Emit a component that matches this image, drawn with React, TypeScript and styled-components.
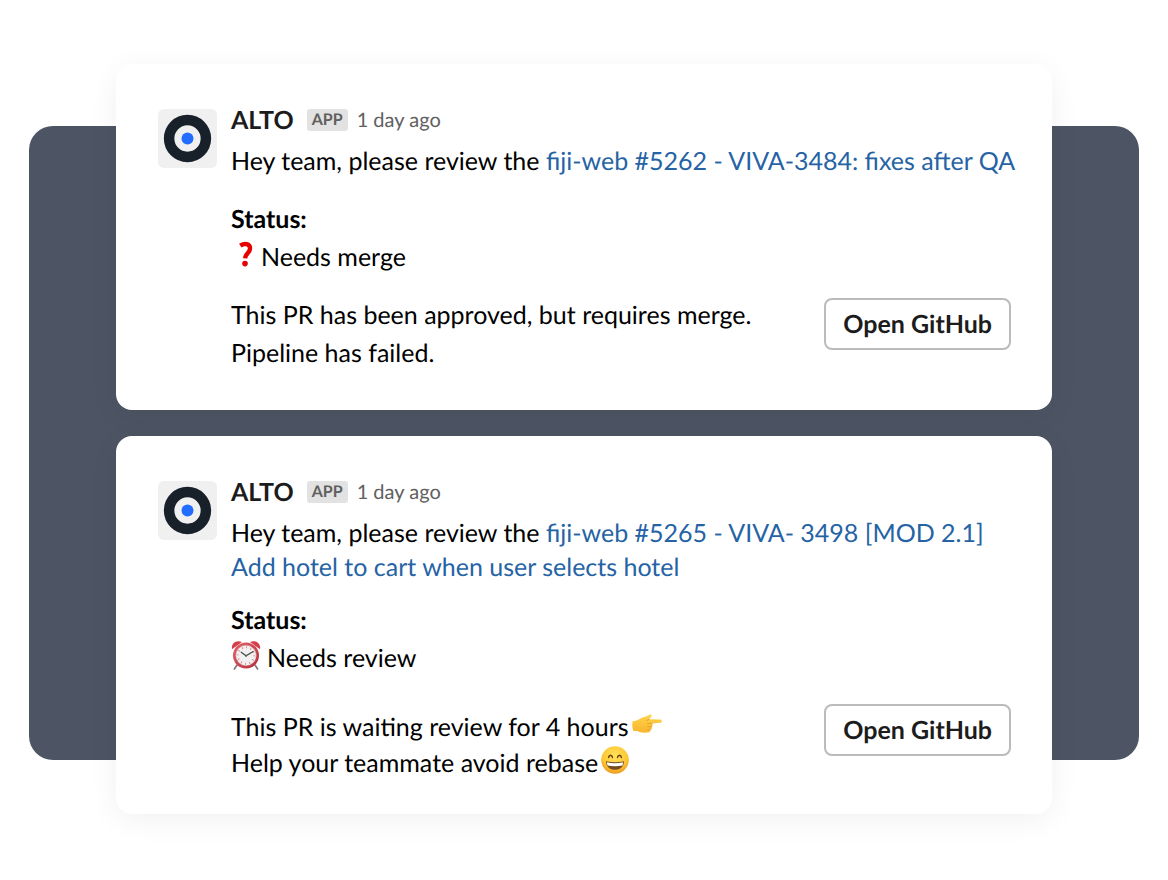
import React, { useId } from 'react';
import styled, { createGlobalStyle } from 'styled-components';

const GlobalStyle = createGlobalStyle`
  *, *::before, *::after { box-sizing: border-box; }
  body {
    margin: 0;
    background: #fff;
    color: #000;
    font-family: Lato, "Liberation Sans", sans-serif;
    font-size: 25px;
    text-rendering: geometricPrecision;
  }
`;

const Page = styled.main`
  display: grid;
  padding: 64px 29px;
`;

const Backdrop = styled.div`
  grid-area: 1 / 1;
  margin: 62px 0 54px;
  border-radius: 24px;
  background: #4d5564;
`;

const Messages = styled.div`
  grid-area: 1 / 1;
  display: flex;
  flex-direction: column;
  gap: 26px;
  margin: 0 87px;
`;

const Card = styled.article<{ $bottom: number }>`
  display: flex;
  align-items: flex-start;
  gap: 14px;
  padding: 40px 29px ${(p) => p.$bottom}px 42px;
  border-radius: 16px;
  background: #fff;
  box-shadow: 0 6px 30px rgba(0, 0, 0, 0.06);
`;

const Avatar = styled.svg`
  flex: none;
  width: 59px;
  height: 59px;
  margin-top: 5px;
`;

const Content = styled.div`
  flex: 1;
  min-width: 0;
`;

const Header = styled.header`
  display: flex;
  align-items: center;
  height: 32px;
  margin-bottom: 8px;
`;

const Name = styled.h2`
  margin: 0 13px 0 0;
  color: #1d1c1d;
  font-size: 25px;
  font-weight: 700;
`;

const Tag = styled.span`
  margin-right: 9px;
  padding: 0 5px;
  border-radius: 3px;
  background: #e2e2e2;
  color: #616061;
  font-size: 16px;
  font-weight: 700;
  line-height: 22px;
`;

const Time = styled.time`
  color: #616061;
  font-size: 20px;
`;

const Text = styled.p`
  margin: 0;
  line-height: 34px;
`;

const PrLink = styled.a`
  color: #2563a5;
  text-decoration: none;
`;

const Status = styled.section<{ $gap: number }>`
  margin-top: ${(p) => p.$gap}px;
  line-height: 38px;
`;

const StatusTitle = styled.h3`
  margin: 0;
  font-size: 25px;
  font-weight: 700;
`;

const StatusLine = styled.p`
  display: flex;
  align-items: center;
  gap: 6px;
  margin: 0;
`;

const Footer = styled.footer<{ $gap: number }>`
  display: flex;
  align-items: flex-start;
  justify-content: space-between;
  margin-top: ${(p) => p.$gap}px;
  padding-right: 12px;
`;

const Summary = styled.div<{ $line: number; $top: number }>`
  padding-top: ${(p) => p.$top}px;
  line-height: ${(p) => p.$line}px;
`;

const SummaryLine = styled.p`
  display: flex;
  align-items: center;
  gap: 3px;
  margin: 0;
`;

const Button = styled.button<{ $top: number }>`
  flex: none;
  height: 52px;
  margin-top: ${(p) => p.$top}px;
  padding: 0 17px;
  border: 2px solid #bbb;
  border-radius: 8px;
  background: #fff;
  color: #1d1c1d;
  font: 700 25px Lato, "Liberation Sans", sans-serif;
  text-rendering: inherit;
`;

const Emoji = styled.svg<{ $w: number; $h: number }>`
  flex: none;
  width: ${(p) => p.$w}px;
  height: ${(p) => p.$h}px;
  margin-bottom: 6px;
`;

const Question = () => (
  <Emoji $w={24} $h={26} viewBox="0 0 24 26" role="img" aria-label="Question">
    <path d="M9.3 4.6C13.4 1.8 19.4 2.4 19 7.9C18.7 12 14.5 12.1 14.2 17.4" fill="none" stroke="#e60000" strokeWidth="4.4" />
    <circle cx="14" cy="22.6" r="2.8" fill="#e60000" />
  </Emoji>
);

const Clock = () => {
  const id = useId();
  return (
    <Emoji $w={30} $h={30} viewBox="0 0 30 30" role="img" aria-label="Alarm clock">
      <defs>
        <linearGradient id={id} x1="0" y1="0" x2="1" y2="1">
          <stop offset="0" stopColor="#e8606b" />
          <stop offset="1" stopColor="#b52b39" />
        </linearGradient>
      </defs>
      <path d="M6 25L3.4 29M24 25L26.6 29" stroke="#777" strokeWidth="1.6" strokeLinecap="round" />
      <path d="M1 9.2C-.2 3.6 5.4-.8 11 2.1ZM29 9.2C30.2 3.6 24.6-.8 19 2.1Z" fill="#d53d4b" />
      <circle cx="15" cy="15.5" r="13" fill={`url(#${id})`} />
      <circle cx="15" cy="15.5" r="10.4" fill="#f0f0f0" stroke="#bd7479" strokeWidth=".6" />
      <circle cx="15" cy="15.5" r="8.2" fill="none" stroke="#e96f79" strokeWidth="2" strokeDasharray=".8 3.493" />
      <path d="M10.2 12.2L15 15.8L22.2 11.5" fill="none" stroke="#444" strokeWidth="1.1" strokeLinecap="round" />
      <circle cx="15" cy="15.8" r="1" fill="#555" />
    </Emoji>
  );
};

const Pointing = () => {
  const id = useId();
  return (
    <Emoji $w={30} $h={20} viewBox="0 0 30 20" role="img" aria-label="Pointing right">
      <defs>
        <linearGradient id={id} x1="0" y1="0" x2="0" y2="1">
          <stop offset="0" stopColor="#ffd34c" />
          <stop offset="1" stopColor="#f8b62d" />
        </linearGradient>
      </defs>
      <path d="M.7 7.2C4 7.2 6.2 5.7 9 4.3C12 2.8 15.5 2.3 17.4.8C19.2-.4 20.5 1.4 19 3L17.1 5.3L28 5.6C30.4 5.7 30.4 8.7 28 8.8L20 9.4C21.3 10.7 20.8 12.3 19.6 12.7C20.4 14.2 19.6 15.5 18.3 15.7C18.6 17.4 17.6 18.5 15.5 18.6C10.7 19 7.8 18.4 5.4 17.1L1.3 16.9C.2 14-.1 10 .7 7.2Z" fill={`url(#${id})`} />
      <path d="M20 9.4L15.6 9.6M19.6 12.7L15.8 12.8M18.3 15.7L15.6 15.6M17.1 5.3L14.8 6.6" fill="none" stroke="#dc9620" strokeWidth=".7" strokeLinecap="round" />
    </Emoji>
  );
};

const Smile = () => {
  const id = useId();
  return (
    <Emoji $w={28} $h={28} viewBox="0 0 28 28" role="img" aria-label="Smile">
      <defs>
        <radialGradient id={id} cx=".5" cy=".35" r=".7">
          <stop offset="0" stopColor="#ffe45c" />
          <stop offset=".65" stopColor="#fdc534" />
          <stop offset="1" stopColor="#e88b18" />
        </radialGradient>
      </defs>
      <circle cx="14" cy="14" r="13.8" fill={`url(#${id})`} />
      <path d="M7.6 11.4C8.2 8.4 10.8 8.4 11.5 11.4M16.5 11.4C17.2 8.4 19.8 8.4 20.4 11.4" fill="none" stroke="#69400f" strokeWidth="1.5" strokeLinecap="round" />
      <path d="M4.9 15.3Q14 17.2 23.1 15.3C22.8 20.8 19 23.8 14 23.8S5.2 20.8 4.9 15.3Z" fill="#754b20" />
      <path d="M5.8 16.3Q14 18 22.2 16.3L21.5 19.4Q14 21 6.5 19.4Z" fill="#fff" />
    </Emoji>
  );
};

type MessageProps = {
  pr: string;
  status: React.ReactNode;
  summary: React.ReactNode;
  line: number;
  statusGap: number;
  footerGap: number;
  summaryTop: number;
  buttonTop: number;
  bottom: number;
};

const Message = ({ pr, status, summary, line, statusGap, footerGap, summaryTop, buttonTop, bottom }: MessageProps) => (
  <Card $bottom={bottom}>
    <Avatar viewBox="0 0 59 59" aria-hidden="true">
      <rect width="59" height="59" rx="6" fill="#f0f0f0" />
      <circle cx="29.5" cy="29.5" r="18.4" fill="none" stroke="#18202a" strokeWidth="10.5" />
      <circle cx="29.5" cy="29.5" r="6" fill="#226dff" />
    </Avatar>
    <Content>
      <Header>
        <Name>ALTO</Name>
        <Tag>APP</Tag>
        <Time>1 day ago</Time>
      </Header>
      <Text>
        Hey team, please review the <PrLink href="#">{pr}</PrLink>
      </Text>
      <Status $gap={statusGap}>
        <StatusTitle>Status:</StatusTitle>
        <StatusLine>{status}</StatusLine>
      </Status>
      <Footer $gap={footerGap}>
        <Summary $line={line} $top={summaryTop}>{summary}</Summary>
        <Button type="button" $top={buttonTop}>Open GitHub</Button>
      </Footer>
    </Content>
  </Card>
);

export default function App() {
  return (
    <>
      <GlobalStyle />
      <Page>
        <Backdrop />
        <Messages>
          <Message
            pr="fiji-web #5262 - VIVA-3484: fixes after QA"
            status={<><Question />Needs merge</>}
            summary={
              <>
                <SummaryLine>This PR has been approved, but requires merge.</SummaryLine>
                <SummaryLine>Pipeline has failed.</SummaryLine>
              </>
            }
            line={38}
            statusGap={22}
            footerGap={20}
            summaryTop={0}
            buttonTop={2}
            bottom={38}
          />
          <Message
            pr="fiji-web #5265 - VIVA- 3498 [MOD 2.1] Add hotel to cart when user selects hotel"
            status={<><Clock />Needs review</>}
            summary={
              <>
                <SummaryLine>This PR is waiting review for 4 hours <Pointing /></SummaryLine>
                <SummaryLine>Help your teammate avoid rebase <Smile /></SummaryLine>
              </>
            }
            line={36}
            statusGap={17}
            footerGap={27}
            summaryTop={5}
            buttonTop={0}
            bottom={33}
          />
        </Messages>
      </Page>
    </>
  );
}
